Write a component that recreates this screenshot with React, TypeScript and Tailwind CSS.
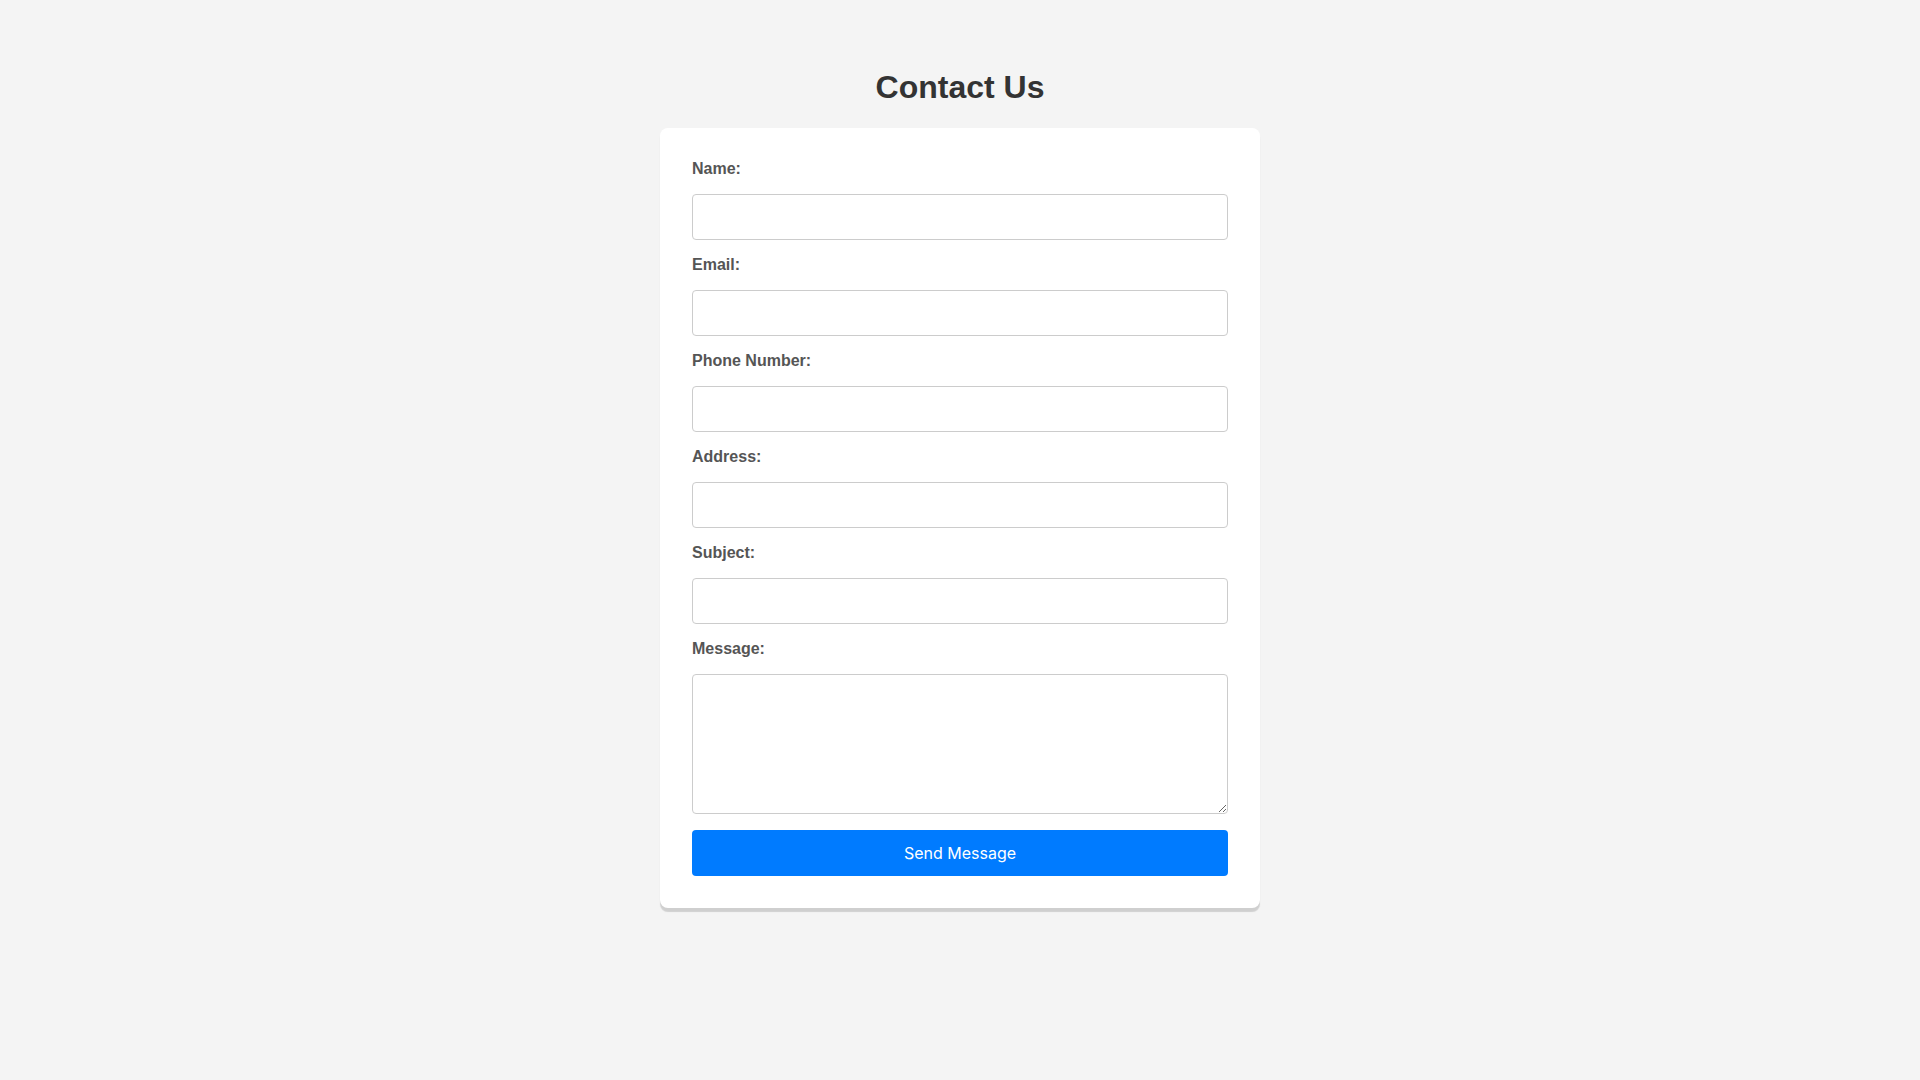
import React from "react";

const fields = [
  { id: "name", label: "Name:", type: "text" },
  { id: "email", label: "Email:", type: "email" },
  { id: "phone", label: "Phone Number:", type: "tel" },
  { id: "address", label: "Address:", type: "text" },
  { id: "subject", label: "Subject:", type: "text" },
];

export default function App() {
  return (
    <div className="min-h-screen bg-[#f4f4f4] flex flex-col items-center pt-[69px] font-['Liberation_Sans',Arial,sans-serif]">
      <h1 className="text-[32px] leading-[37px] font-bold text-[#333] mb-[22px]">Contact Us</h1>
      <form
        className="w-[600px] bg-white rounded-lg p-8 flex flex-col gap-4 shadow-[0_4px_1px_rgba(0,0,0,0.15)]"
        onSubmit={(e) => e.preventDefault()}
      >
        {fields.map((f) => (
          <React.Fragment key={f.id}>
            <label htmlFor={f.id} className="block text-base leading-[18px] font-bold text-[#555]">
              {f.label}
            </label>
            <input
              id={f.id}
              type={f.type}
              className="block w-full h-[46px] border border-[#ccc] rounded px-2.5 text-base outline-none"
            />
          </React.Fragment>
        ))}
        <label htmlFor="message" className="block text-base leading-[18px] font-bold text-[#555]">
          Message:
        </label>
        <textarea
          id="message"
          className="block w-full h-[140px] border border-[#ccc] rounded px-2.5 py-2 text-base outline-none"
        />
        <button
          type="submit"
          className="w-full h-[46px] bg-[#007bff] text-white rounded text-base font-['Inter',sans-serif]"
        >
          Send Message
        </button>
      </form>
    </div>
  );
}
